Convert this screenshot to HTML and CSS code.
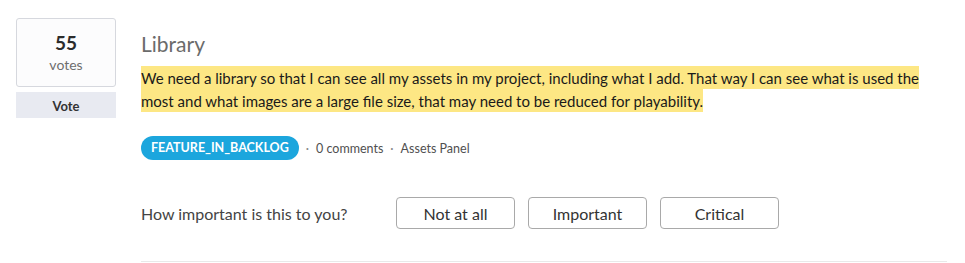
FILE: index.html
```html
<!DOCTYPE html>
<html lang="en">
<head>
  <meta charset="UTF-8" />
  <title>Library idea</title>
  <link rel="stylesheet" href="styles.css">
</head>
<body>
  <div class="idea">
    <div class="vote-col">
      <div class="vote-box">
        <div class="vote-count">55</div>
        <div class="vote-label">votes</div>
      </div>
      <button class="vote-btn">Vote</button>
    </div>

    <div class="idea-body">
      <h2 class="idea-title">Library</h2>
      <p class="idea-text"><mark>We need a library so that I can see all my assets in my project, including what I add. That way I can see what is used the most and what images are a large file size, that may need to be reduced for playability.</mark></p>

      <div class="meta">
        <span class="status">FEATURE_IN_BACKLOG</span>
        <span class="dot">&middot;</span>
        <span>0 comments</span>
        <span class="dot">&middot;</span>
        <span>Assets Panel</span>
      </div>

      <div class="importance">
        <span class="question">How important is this to you?</span>
        <button class="imp-btn">Not at all</button>
        <button class="imp-btn">Important</button>
        <button class="imp-btn">Critical</button>
      </div>
    </div>
  </div>
</body>
</html>
```

FILE: styles.css
```css
* {
  box-sizing: border-box;
  margin: 0;
  padding: 0;
}
body {
  font-family: "Lato", "Open Sans", sans-serif;
  background: #fff;
  color: #222;
}

.idea {
  display: flex;
  padding: 18px 18px 0 16px;
}

/* Vote column */
.vote-col {
  width: 100px;
  flex-shrink: 0;
  display: flex;
  flex-direction: column;
  gap: 5px;
}
.vote-box {
  height: 69px;
  border: 1px solid #d6d8de;
  border-radius: 3px;
  background: #fcfcfd;
  text-align: center;
  padding-top: 12px;
}
.vote-count {
  font-size: 19px;
  font-weight: bold;
  color: #2c2c2c;
  line-height: 24px;
}
.vote-label {
  font-size: 14px;
  color: #6e6e6e;
  line-height: 20px;
}
.vote-btn {
  height: 26px;
  border: none;
  background: #e8eaf1;
  font-family: inherit;
  font-size: 13px;
  font-weight: bold;
  color: #333;
  padding-top: 2px;
}

/* Idea body */
.idea-body {
  flex: 1;
  margin-left: 25px;
  border-bottom: 1px solid #e9e9e9;
  padding-bottom: 32px;
}
.idea-title {
  font-size: 21px;
  font-weight: normal;
  color: #6b6b6b;
  line-height: 28px;
  margin-top: 12px;
}
.idea-text {
  font-size: 15px;
  line-height: 23px;
  color: #1a1a1a;
  margin-top: 9px;
  padding-right: 20px;
}
.idea-text mark {
  background: #fde784;
  color: inherit;
  padding: 3px 0 2px;
}

.meta {
  display: flex;
  align-items: center;
  gap: 7px;
  margin-top: 23px;
  font-size: 12.5px;
  color: #505050;
}
.status {
  background: #1ca6dd;
  color: #fff;
  font-weight: bold;
  font-size: 12.5px;
  border-radius: 12px;
  padding: 3px 10px;
  line-height: 18px;
}
.dot {
  color: #888;
}

.importance {
  display: flex;
  align-items: center;
  gap: 13px;
  margin-top: 37px;
}
.question {
  font-size: 16px;
  color: #444;
  width: 242px;
}
.imp-btn {
  width: 119px;
  height: 32px;
  border: 1px solid #a9a9a9;
  border-radius: 4px;
  background: #fff;
  font-family: inherit;
  font-size: 16px;
  color: #333;
}
```
